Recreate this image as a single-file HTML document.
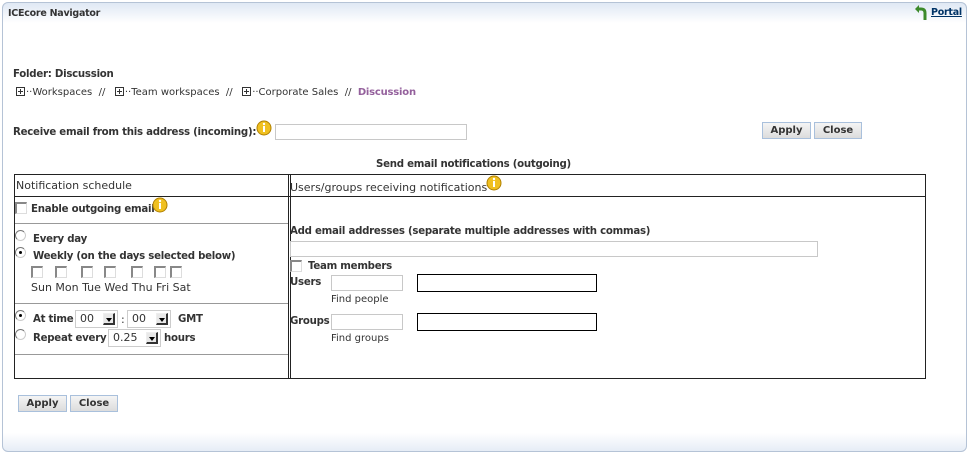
<!DOCTYPE html>
<html><head><style>
*{margin:0;padding:0;box-sizing:border-box}
body{width:970px;height:455px;background:#fff;font-family:"DejaVu Sans","Liberation Sans",sans-serif;font-size:11px;color:#333;position:relative;overflow:hidden}
.a{position:absolute;white-space:nowrap;line-height:13px}
.b{font-weight:bold;font-size:10.2px;letter-spacing:-0.25px}
.frame{position:absolute;left:2px;top:2px;width:965px;height:450px;border:1px solid #b5c3d6;border-radius:6px;background:linear-gradient(#dfe8f4,#fff 20px,#fff 430px,#e6edf6)}
.in{position:absolute;border:1px solid #c8c8c8;background:#fff}
.btn{position:absolute;height:17px;border:1px solid #a9c0dc;background:linear-gradient(#f4f4f4,#dcdcdc);font-weight:bold;font-size:10px;text-align:center;line-height:15px;color:#333}
.bx{position:absolute;width:12px;height:12px;border-left:2px solid #888;border-top:2px solid #888;border-right:1px solid #ddd;border-bottom:1px solid #ddd}
.rd{position:absolute;width:11px;height:11px;border-radius:50%;border:1px solid #ccc;border-left-color:#777;border-top-color:#777}
.rd.on::after{content:"";position:absolute;left:3px;top:3px;width:3px;height:3px;background:#000;border-radius:50%}
.pl{display:inline-block;width:9px;height:9px;border:1px solid #333;position:relative;vertical-align:-1px;margin-right:1px}
.pl::before{content:"";position:absolute;left:1px;top:3px;width:5px;height:1px;background:#333}
.pl::after{content:"";position:absolute;left:3px;top:1px;width:1px;height:5px;background:#333}
.sel{position:absolute;height:18px;border:1px solid #ccc;background:#fff;font-size:11px;line-height:16px;padding-left:4px}
.sel i{position:absolute;right:2px;top:2px;width:12px;height:12px;border-right:2px solid #333;border-bottom:2px solid #333;border-left:1px solid #eee;border-top:1px solid #eee;background:#e8e8e8}
.sel i::after{content:"";position:absolute;left:2px;top:4px;border:3px solid transparent;border-top:4px solid #000}
.hl{position:absolute;height:1px;background:#999}
</style></head><body>
<div class="frame"></div>
<div class="a b" style="left:8px;top:7px;font-size:9.5px">ICEcore Navigator</div>
<svg class="a" style="left:914px;top:5px" width="14" height="16"><path d="M11 15V8Q11 4 7 4H4" fill="none" stroke="#3c8a2a" stroke-width="3"/><path d="M1 4L5 0V8Z" fill="#3c8a2a"/></svg>
<div class="a b" style="left:931px;top:6px;font-size:9.5px;color:#003366;text-decoration:underline">Portal</div>
<div class="a b" style="left:13px;top:68px">Folder: Discussion</div>
<div class="a" style="left:16px;top:86px;font-size:10px"><span class="pl"></span>··Workspaces&nbsp; //&nbsp;&nbsp; <span class="pl"></span>··Team workspaces&nbsp; //&nbsp;&nbsp; <span class="pl"></span>··Corporate Sales&nbsp; //&nbsp; <b style="color:#94609c;letter-spacing:-0.2px">Discussion</b></div>
<div class="a b" style="left:13px;top:126px">Receive email from this address (incoming):</div>
<svg class="a" style="left:256px;top:120px" width="16" height="16"><circle cx="8" cy="8" r="7" fill="#f0c020" stroke="#b08000"/><rect x="7" y="6" width="2" height="6" fill="#fff"/><circle cx="8" cy="4" r="1.2" fill="#fff"/></svg>
<div class="in" style="left:275px;top:124px;width:192px;height:16px"></div>
<div class="btn" style="left:762px;top:122px;width:49px">Apply</div>
<div class="btn" style="left:814px;top:122px;width:48px">Close</div>
<div class="a b" style="left:376px;top:158px">Send email notifications (outgoing)</div>
<div style="position:absolute;left:14px;top:174px;width:912px;height:205px;border:1px solid #222"></div>
<div class="hl" style="left:14px;top:196px;width:912px;background:#222"></div>
<div style="position:absolute;left:288px;top:174px;width:3px;height:205px;border-left:1px solid #222;border-right:1px solid #222"></div>
<div class="a" style="left:16px;top:179px">Notification schedule</div>
<div class="a" style="left:290px;top:181px">Users/groups receiving notifications</div>
<svg class="a" style="left:486px;top:175px" width="16" height="16"><circle cx="8" cy="8" r="7" fill="#f0c020" stroke="#b08000"/><rect x="7" y="6" width="2" height="6" fill="#fff"/><circle cx="8" cy="4" r="1.2" fill="#fff"/></svg>
<div class="bx" style="left:15px;top:202px"></div>
<div class="a b" style="left:31px;top:203px">Enable outgoing email</div>
<svg class="a" style="left:152px;top:197px" width="16" height="16"><circle cx="8" cy="8" r="7" fill="#f0c020" stroke="#b08000"/><rect x="7" y="6" width="2" height="6" fill="#fff"/><circle cx="8" cy="4" r="1.2" fill="#fff"/></svg>
<div class="hl" style="left:15px;top:223px;width:273px"></div>
<div class="rd" style="left:15px;top:230px"></div>
<div class="a b" style="left:33px;top:233px">Every day</div>
<div class="rd on" style="left:15px;top:247px"></div>
<div class="a b" style="left:33px;top:250px">Weekly (on the days selected below)</div>
<div class="bx" style="left:31px;top:266px"></div><div class="bx" style="left:55px;top:266px"></div><div class="bx" style="left:81px;top:266px"></div><div class="bx" style="left:104px;top:266px"></div><div class="bx" style="left:131px;top:266px"></div><div class="bx" style="left:154px;top:266px"></div><div class="bx" style="left:170px;top:266px"></div>
<div class="a" style="left:31px;top:281px">Sun Mon Tue Wed Thu Fri Sat</div>
<div class="hl" style="left:15px;top:303px;width:273px"></div>
<div class="rd on" style="left:15px;top:310px"></div>
<div class="a b" style="left:33px;top:313px">At time</div>
<div class="sel" style="left:75px;top:310px;width:43px">00<i></i></div>
<div class="a" style="left:121px;top:313px">:</div>
<div class="sel" style="left:127px;top:310px;width:44px">00<i></i></div>
<div class="a b" style="left:178px;top:313px">GMT</div>
<div class="rd" style="left:15px;top:329px"></div>
<div class="a b" style="left:33px;top:332px">Repeat every</div>
<div class="sel" style="left:108px;top:329px;width:53px">0.25<i></i></div>
<div class="a b" style="left:164px;top:332px">hours</div>
<div class="hl" style="left:15px;top:354px;width:273px"></div>
<div class="a b" style="left:290px;top:225px">Add email addresses (separate multiple addresses with commas)</div>
<div class="in" style="left:290px;top:241px;width:528px;height:16px"></div>
<div class="bx" style="left:290px;top:260px"></div>
<div class="a b" style="left:308px;top:260px">Team members</div>
<div class="a b" style="left:290px;top:276px">Users</div>
<div class="in" style="left:331px;top:275px;width:72px;height:16px"></div>
<div style="position:absolute;left:417px;top:274px;width:180px;height:18px;border:1px solid #000"></div>
<div class="a" style="left:331px;top:293px;font-size:10px">Find people</div>
<div class="a b" style="left:290px;top:315px">Groups</div>
<div class="in" style="left:331px;top:314px;width:72px;height:16px"></div>
<div style="position:absolute;left:417px;top:313px;width:180px;height:18px;border:1px solid #000"></div>
<div class="a" style="left:331px;top:332px;font-size:10px">Find groups</div>
<div class="btn" style="left:18px;top:395px;width:49px">Apply</div>
<div class="btn" style="left:70px;top:395px;width:48px">Close</div>
</body></html>
